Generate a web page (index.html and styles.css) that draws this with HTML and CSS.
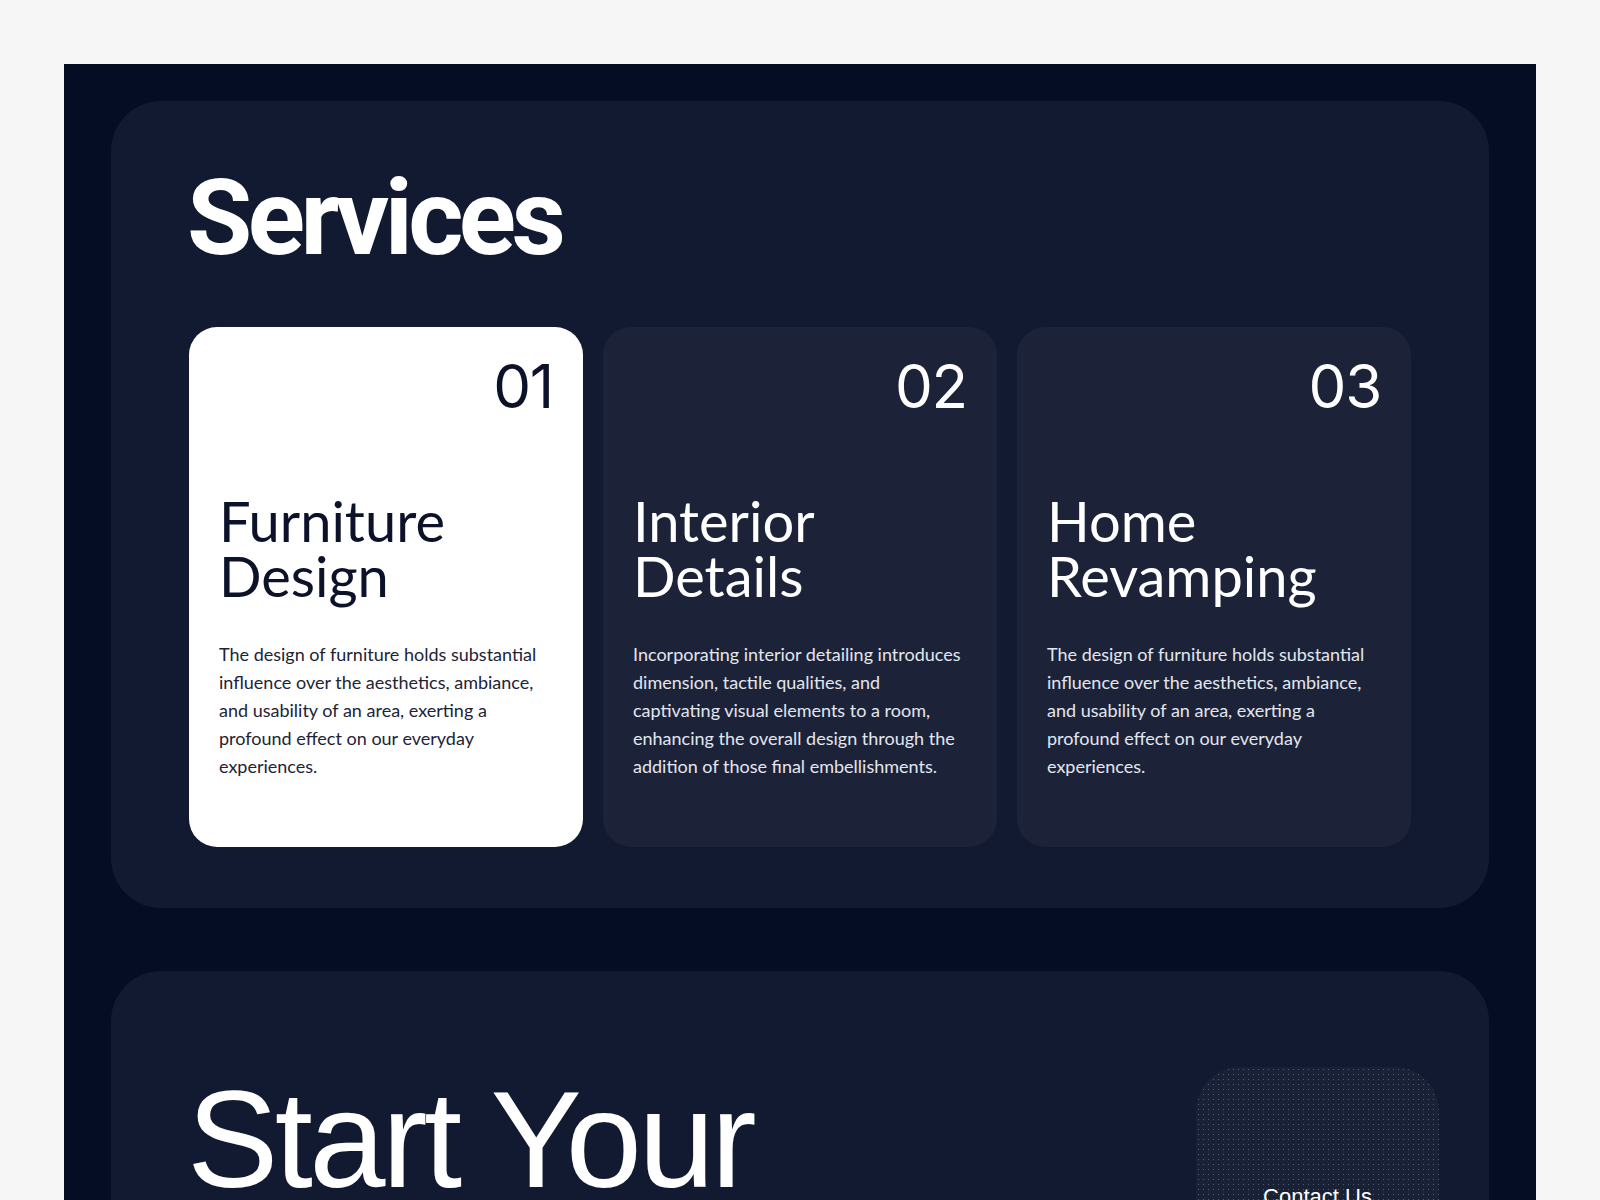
FILE: index.html
```html
<!DOCTYPE html>
<html lang="en">
<head>
<meta charset="utf-8">
<title>Services</title>
<link rel="stylesheet" href="styles.css">
</head>
<body>
<div class="frame">
  <section class="panel services">
    <h1 class="services-title">Services</h1>
    <div class="cards">
      <article class="card card-light">
        <div class="card-num">01</div>
        <h2 class="card-title">Furniture<br>Design</h2>
        <p class="card-text">The design of furniture holds substantial influence over the aesthetics, ambiance, and usability of an area, exerting a profound effect on our everyday experiences.</p>
      </article>
      <article class="card card-dark">
        <div class="card-num">02</div>
        <h2 class="card-title">Interior<br>Details</h2>
        <p class="card-text">Incorporating interior detailing introduces dimension, tactile qualities, and captivating visual elements to a room, enhancing the overall design through the addition of those final embellishments.</p>
      </article>
      <article class="card card-dark">
        <div class="card-num">03</div>
        <h2 class="card-title">Home<br>Revamping</h2>
        <p class="card-text">The design of furniture holds substantial influence over the aesthetics, ambiance, and usability of an area, exerting a profound effect on our everyday experiences.</p>
      </article>
    </div>
  </section>
  <section class="panel cta">
    <h2 class="cta-title">Start Your<br>Project</h2>
    <a class="contact-btn" href="#">Contact Us</a>
  </section>
</div>
</body>
</html>
```
FILE: styles.css
```css
* { box-sizing: border-box; }
html, body { margin: 0; }
body {
  background: #f6f6f6;
  padding: 64px;
  font-family: "Liberation Sans", Arial, sans-serif;
}
.frame {
  background: #050d25;
  padding: 37px 47px 64px;
}
.panel {
  background: #111a30;
  border-radius: 50px;
}
.services {
  padding: 64px 78px 61px 76px;
}
.services-title {
  margin: 0;
  font-family: Roboto, "Liberation Sans", sans-serif;
  font-weight: 700;
  font-size: 106px;
  line-height: 1;
  letter-spacing: -0.043em;
  color: #ffffff;
}
.cards {
  margin-top: 56px;
  margin-left: 2px;
  display: grid;
  grid-template-columns: repeat(3, 1fr);
  gap: 20px;
}
.card {
  height: 520px;
  border-radius: 28px;
  padding: 29px 30px 0 30px;
  display: flex;
  flex-direction: column;
}
.card-light { background: #ffffff; color: #0b1229; }
.card-dark { background: #1c2338; color: #ffffff; }
.card-num {
  align-self: flex-end;
  font-family: Inter, "Noto Sans", sans-serif;
  font-size: 60px;
  line-height: 1;
  font-weight: 400;
  letter-spacing: -0.02em;
}
.card-title {
  margin: 77px 0 0;
  font-family: Lato, "Noto Sans", sans-serif;
  font-weight: 400;
  font-size: 56px;
  line-height: 55px;
  letter-spacing: 0;
}
.card-text {
  margin: 37px 0 0;
  font-family: Lato, "Noto Sans", sans-serif;
  font-size: 18px;
  line-height: 28px;
}
.card-light .card-text { color: #1d2438; }
.card-dark .card-text { color: #e3e6ee; }
.cta {
  margin-top: 63px;
  padding: 96px 50px 120px 76px;
  display: flex;
  justify-content: space-between;
  align-items: flex-start;
}
.cta-title {
  margin: 4px 0 0;
  font-family: "Liberation Sans", Arial, sans-serif;
  font-weight: 400;
  font-size: 137px;
  line-height: 1;
  letter-spacing: -0.026em;
  color: #ffffff;
}
.contact-btn {
  width: 243px;
  height: 260px;
  border-radius: 44px;
  background-color: #192136;
  background-image: radial-gradient(rgba(255,255,255,0.26) 0.7px, transparent 1px);
  background-size: 5px 5px;
  display: flex;
  align-items: center;
  justify-content: center;
  color: #ffffff;
  text-decoration: none;
  font-family: "Liberation Sans", Arial, sans-serif;
  font-size: 22px;
}
```
